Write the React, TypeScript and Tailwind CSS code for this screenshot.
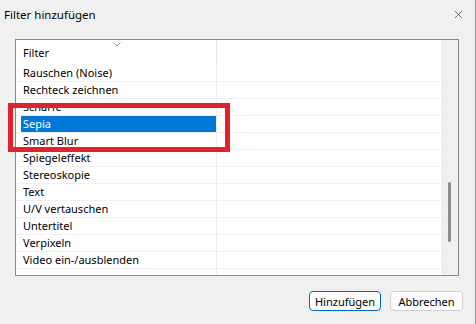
import { X } from 'lucide-react';

const rows = [
    'Rauschen (Noise)',
    'Rechteck zeichnen',
    'Schärfe',
    'Sepia',
    'Smart Blur',
    'Spiegeleffekt',
    'Stereoskopie',
    'Text',
    'U/V vertauschen',
    'Untertitel',
    'Verpixeln',
    'Video ein-/ausblenden',
    '',
];

export default function App() {
    return (
        <div className="relative w-[476px] h-[324px] overflow-hidden bg-[#f0f0f0] text-[11px] text-black font-['Noto_Sans',sans-serif] border-r border-[#9c9c9c]">
            {/* title bar */}
            <div className="flex h-[29px] items-center justify-between pl-[4px] pr-[10px]">
                <span className="text-[11.5px] leading-none">Filter hinzufügen</span>
                <X size={13} strokeWidth={1.1} className="text-[#1a1a1a]" />
            </div>

            {/* list box */}
            <div className="mt-[10px] ml-[15px] flex h-[237px] w-[444px] border border-[#828790] bg-white">
                <div className="flex flex-1 flex-col overflow-hidden">
                    <div className="relative flex h-[25px] shrink-0">
                        <div className="flex w-[201px] items-center border-r border-[#e5e5e5] pl-[7px] pt-[1px]">Filter</div>
                        <svg className="absolute left-[97px] top-[2px]" width="8" height="5" viewBox="0 0 8 5">
                            <path d="M0.5 0.5 L4 4 L7.5 0.5" fill="none" stroke="#9a9a9a" strokeWidth="1" />
                        </svg>
                    </div>
                    {rows.map((r) => (
                        <div key={r || 'blank'} className="flex h-[17px] shrink-0 border-b border-[#f0f0f0]">
                            <div className="h-full w-[201px] border-r border-[#f0f0f0] pl-[5px]">
                                <div
                                    className={
                                        r === 'Sepia'
                                            ? 'flex h-full items-center bg-[#0078d7] pl-[2px] pt-[1px] text-white'
                                            : 'flex h-full items-center pl-[2px] pt-[1px]'
                                    }
                                >
                                    {r}
                                </div>
                            </div>
                        </div>
                    ))}
                </div>
                <div className="relative w-[17px] shrink-0 bg-[#f0f0f0]">
                    <div className="absolute left-[7px] top-[142px] h-[60px] w-[3px] rounded-full bg-[#8a8a8a]" />
                </div>
            </div>

            {/* buttons */}
            <div className="mt-[15px] flex justify-end gap-[9px] pr-[12px]">
                <button className="h-[20px] w-[72px] rounded-[4px] border border-[#0067c0] bg-[#fdfdfd] leading-none">
                    Hinzufügen
                </button>
                <button className="h-[20px] w-[73px] rounded-[4px] border border-[#d0d0d0] bg-[#fdfdfd] leading-none">
                    Abbrechen
                </button>
            </div>

            {/* annotation */}
            <div className="absolute left-[8px] top-[103px] h-[49px] w-[222px] border-[5px] border-[#e3212b]" />
        </div>
    );
}
